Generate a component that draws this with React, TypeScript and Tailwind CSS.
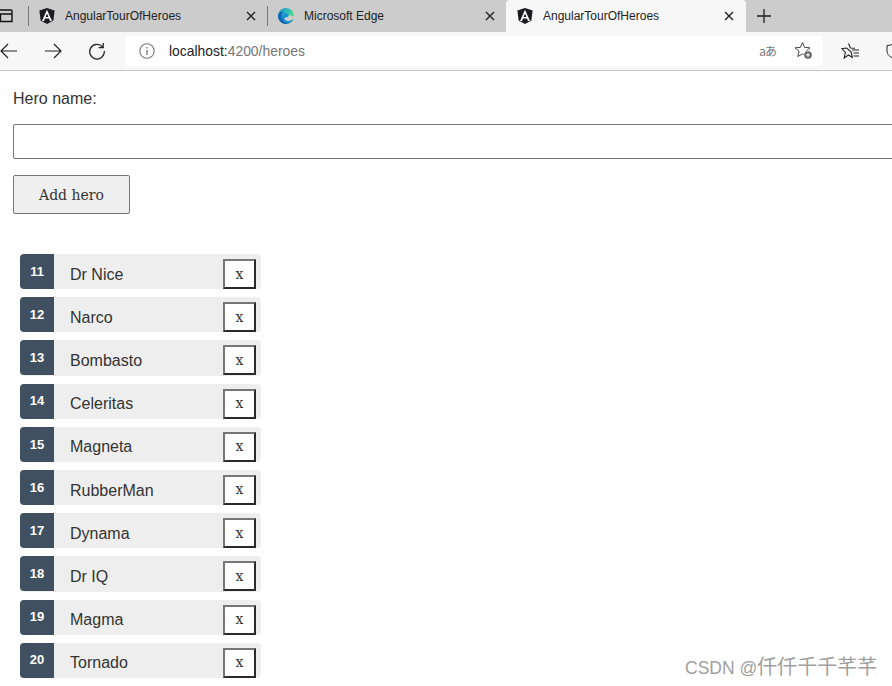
import React from "react";

const heroes = [
  { id: 11, name: "Dr Nice" },
  { id: 12, name: "Narco" },
  { id: 13, name: "Bombasto" },
  { id: 14, name: "Celeritas" },
  { id: 15, name: "Magneta" },
  { id: 16, name: "RubberMan" },
  { id: 17, name: "Dynama" },
  { id: 18, name: "Dr IQ" },
  { id: 19, name: "Magma" },
  { id: 20, name: "Tornado" },
];

function AngularIcon() {
  return (
    <svg width="16" height="16" viewBox="0 0 16 16" className="shrink-0">
      <path d="M8 0 L15.6 2.6 L14.4 12.4 L8 16 L1.6 12.4 L0.4 2.6 Z" fill="#1c1c20" />
      <path d="M8 1.8 L3 13 H5 L6 10.4 H10 L11 13 H13 Z M8 5.6 L9.4 8.9 H6.6 Z" fill="#fff" fillRule="evenodd" />
    </svg>
  );
}

function EdgeIcon() {
  return (
    <svg width="16" height="16" viewBox="0 0 16 16" className="shrink-0">
      <defs>
        <linearGradient id="edgeA" x1="0" y1="0" x2="1" y2="0.6">
          <stop offset="0" stopColor="#1a86d0" />
          <stop offset="0.55" stopColor="#30c0b8" />
          <stop offset="1" stopColor="#6be07c" />
        </linearGradient>
      </defs>
      <circle cx="8" cy="8" r="8" fill="url(#edgeA)" />
      <path d="M0 8.5 C0.4 4.6 3.4 3.4 6 3.8 C3.6 5 3 7.6 3.8 10 C4.8 13 8 15.4 12.6 14.6 C10 16.4 5.6 16.6 2.8 14 C1 12.4 0.2 10.4 0 8.5 Z" fill="#0f64b4" />
      <path d="M5 6.4 C6.6 4.8 9.4 5 10.6 7 C11 8 10.4 9 9 9.2 C8 9.4 6.6 9.4 6.6 10.6 C6.6 12.4 9.6 13.6 12.6 12.6 C13.6 12.2 14.8 11.6 15.6 10.6 C15.2 11.8 14 13.8 12.6 14.6 C8 15.6 4.8 13 3.8 10 C3.4 8.6 4 7.4 5 6.4 Z" fill="#1c8ed8" />
      <path d="M6.6 10.6 C6.6 9.4 8 9.4 9 9.2 C10.4 9 11 8 10.6 7 L16 8.4 C16 9.2 15.9 10 15.6 10.6 C14.8 11.6 13.6 12.2 12.6 12.6 C9.6 13.6 6.6 12.4 6.6 10.6 Z" fill="#cccccc" />
    </svg>
  );
}

function CloseIcon() {
  return (
    <svg width="10" height="10" viewBox="0 0 10 10" className="shrink-0">
      <path d="M1 1 L9 9 M9 1 L1 9" stroke="#222" strokeWidth="1.4" fill="none" />
    </svg>
  );
}

function Separator() {
  return <div className="w-px h-[20px] bg-[#777] shrink-0" />;
}

function Tab({ title, edge, active }: { title: string; edge?: boolean; active?: boolean }) {
  return (
    <div
      className={
        active
          ? "w-[240px] h-[32px] flex items-center pl-[11px] pr-[12px] bg-[#f7f7f7] rounded-t-[4px] shrink-0"
          : "w-[238px] h-[32px] flex items-center pl-[10px] pr-[11px] shrink-0"
      }
    >
      {edge ? <EdgeIcon /> : <AngularIcon />}
      <span className="ml-[10px] flex-1 text-[12px] leading-[16px] text-[#222]">{title}</span>
      <CloseIcon />
    </div>
  );
}

function HeroRow({ id, name }: { id: number; name: string }) {
  return (
    <li className="w-[241px] h-[35.2px] flex items-start bg-[#eeeeee] rounded-[4px]">
      <span className="w-[34px] h-[35px] flex items-center justify-center bg-[#405061] text-white text-[13px] font-bold rounded-l-[4px]">
        {id}
      </span>
      <span className="ml-[16px] flex-1 text-[16px] leading-[20px] text-[#333] pt-[10.6px]">{name}</span>
      <span className="w-[33px] h-[30px] mr-[5px] mt-[5px] flex items-center justify-center bg-white border-2 border-t-[#767676] border-l-[#767676] border-r-[#2a2a2a] border-b-[#2a2a2a] text-[14px] text-[#333] font-['DejaVu_Serif',serif]">
        x
      </span>
    </li>
  );
}

export default function App() {
  return (
    <div className="relative w-[892px] h-[686px] overflow-hidden bg-white font-['Liberation_Sans',sans-serif]">
      {/* tab strip */}
      <div className="h-[32px] bg-[#cccccc] flex items-center">
        <div className="w-[28px] h-[32px] flex items-center shrink-0">
          <svg width="13" height="14" viewBox="0 0 13 14">
            <path d="M-2 1 H11 A1 1 0 0 1 12 2 V12.5 H-2 M-2 5 H12 M0.5 5 V12.5" fill="none" stroke="#111" strokeWidth="1.4" />
          </svg>
        </div>
        <Separator />
        <Tab title="AngularTourOfHeroes" />
        <Separator />
        <Tab title="Microsoft Edge" edge />
        <Tab title="AngularTourOfHeroes" active />
        <svg width="16" height="16" viewBox="0 0 16 16" className="ml-[10px]">
          <path d="M8 1 V15 M1 8 H15" stroke="#222" strokeWidth="1.3" fill="none" />
        </svg>
      </div>

      {/* toolbar */}
      <div className="h-[39px] bg-[#f7f7f7] border-b border-[#c4c4c4] flex items-center pb-[1px]">
        <svg width="18" height="16" viewBox="0 0 18 16" className="shrink-0">
          <path d="M17 8 H1 M8 1 L1 8 L8 15" fill="none" stroke="#222" strokeWidth="1.2" />
        </svg>
        <svg width="18" height="16" viewBox="0 0 18 16" className="ml-[26px] shrink-0">
          <path d="M1 8 H17 M10 1 L17 8 L10 15" fill="none" stroke="#222" strokeWidth="1.2" />
        </svg>
        <svg width="18" height="18" viewBox="0 0 18 18" className="ml-[26px] shrink-0">
          <path d="M14.6 5 A7.3 7.3 0 1 0 16.3 9" fill="none" stroke="#222" strokeWidth="1.3" />
          <path d="M15.2 1 V5.6 H10.6" fill="none" stroke="#222" strokeWidth="1.3" />
        </svg>
        <div className="ml-[19px] w-[698px] h-[30px] bg-white rounded-[4px] flex items-center pl-[14px] shrink-0">
          <svg width="16" height="16" viewBox="0 0 16 16" className="shrink-0">
            <circle cx="8" cy="8" r="7.2" fill="none" stroke="#777" strokeWidth="1.1" />
            <path d="M8 7 V12 M8 4 V5.4" stroke="#777" strokeWidth="1.3" fill="none" />
          </svg>
          <span className="ml-[14px] text-[13.9px] leading-[16px] text-[#222]">
            localhost:<span className="text-[#767676]">4200/heroes</span>
          </span>
          <span className="ml-auto text-[12px] leading-[16px] tracking-[-1px] text-[#777] font-['Noto_Sans_CJK_JP',sans-serif]">aあ</span>
          <svg width="19" height="19" viewBox="0 0 19 19" className="ml-[18px] mr-[10px] shrink-0">
            <path d="M8.5 1.5 L10.6 6.4 L16 6.8 L11.9 10.3 L13.2 15.6 L8.5 12.8 L3.8 15.6 L5.1 10.3 L1 6.8 L6.4 6.4 Z" fill="none" stroke="#444" strokeWidth="1" />
            <circle cx="14" cy="14" r="4.5" fill="#f0f0f0" />
            <circle cx="14" cy="14" r="3.8" fill="#666" />
            <path d="M14 12 V16 M12 14 H16" stroke="#fff" strokeWidth="1" />
          </svg>
        </div>
        <svg width="19" height="18" viewBox="0 0 19 18" className="ml-[18px] shrink-0">
          <path d="M7.5 1.5 L9.4 6 L14 6.3 M10.2 10 L11.2 15.4 L7.5 13 L3.2 16 L4.4 10.4 L0.8 6.6 L5.6 6 Z" fill="none" stroke="#222" strokeWidth="1.1" />
          <path d="M11 8 H18 M12.5 11 H18 M12.5 14 H18" stroke="#222" strokeWidth="1" />
        </svg>
        <svg width="14" height="16" viewBox="0 0 14 16" className="ml-[26px] shrink-0">
          <path d="M1 2.5 C4 2.5 6 1.5 7 1 C8 1.5 10 2.5 13 2.5 V8 C13 11.5 10 14 7 15 C4 14 1 11.5 1 8 Z" fill="none" stroke="#222" strokeWidth="1" />
        </svg>
      </div>

      {/* page */}
      <div className="pl-[13px]">
        <label className="block mt-[18px] text-[16px] leading-[20px] text-[#333]">Hero name:</label>
        <div className="mt-[15px] w-[1000px] h-[35px] bg-white border border-[#767676] rounded-[2px]" />
        <button className="mt-[16px] block w-[117px] h-[39px] pt-[1px] bg-[#efefef] border border-[#767676] rounded-[2px] text-[14px] text-[#333] font-['DejaVu_Serif',serif]">
          Add hero
        </button>
        <ul className="mt-[40px] ml-[7px] flex flex-col gap-[8px]">
          {heroes.map((h) => (
            <HeroRow key={h.id} id={h.id} name={h.name} />
          ))}
        </ul>
      </div>

      {/* watermark */}
      <div className="absolute left-[685px] top-[655px] text-[17.5px] leading-[24px] text-[#a0a0a0] whitespace-nowrap font-['Liberation_Sans','Noto_Sans_CJK_SC',sans-serif]">
        CSDN @<span className="text-[20px]">仟仟千千芊芊</span>
      </div>
    </div>
  );
}
